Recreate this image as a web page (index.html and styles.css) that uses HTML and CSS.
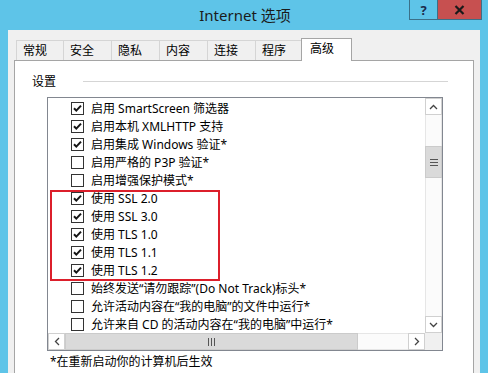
FILE: index.html
```html
<!DOCTYPE html>
<html lang="zh-CN">
<head>
    <meta charset="UTF-8">
    <meta name="viewport" content="width=device-width, initial-scale=1.0">
    <title>Internet 选项</title>
    <link rel="stylesheet" href="styles.css">
</head>
<body>
    <div class="window">
        <!-- Title bar -->
        <div class="titlebar">
            <div></div>
            <div class="title">Internet 选项</div>
            <div class="caption-btns">
                <div class="cap-btn help">?</div>
                <div class="cap-btn close">
                    <svg width="11" height="10" viewBox="0 0 11 10"><path d="M1.5 1 L9.5 9 M9.5 1 L1.5 9" stroke="#1a1a1a" stroke-width="2.2"/></svg>
                </div>
            </div>
        </div>

        <div class="client">
            <!-- Tabs -->
            <div class="tabs">
                <div class="tab t1">常规</div>
                <div class="tab">安全</div>
                <div class="tab">隐私</div>
                <div class="tab">内容</div>
                <div class="tab">连接</div>
                <div class="tab t6">程序</div>
                <div class="tab active">高级</div>
            </div>

            <div class="page">
                <div class="group-head">
                    <span>设置</span>
                    <div class="group-line"></div>
                </div>

                <div class="listbox">
                    <div class="list-items">
                        <div class="item"><span class="cb on"></span>启用 SmartScreen 筛选器</div>
                        <div class="item"><span class="cb on"></span>启用本机 XMLHTTP 支持</div>
                        <div class="item"><span class="cb on"></span>启用集成 Windows 验证*</div>
                        <div class="item"><span class="cb"></span>启用严格的 P3P 验证*</div>
                        <div class="item"><span class="cb"></span>启用增强保护模式*</div>
                        <div class="item"><span class="cb on"></span>使用 SSL 2.0</div>
                        <div class="item"><span class="cb on"></span>使用 SSL 3.0</div>
                        <div class="item"><span class="cb on"></span>使用 TLS 1.0</div>
                        <div class="item"><span class="cb on"></span>使用 TLS 1.1</div>
                        <div class="item"><span class="cb on"></span>使用 TLS 1.2</div>
                        <div class="item"><span class="cb"></span>始终发送“请勿跟踪”(Do Not Track)标头*</div>
                        <div class="item"><span class="cb"></span>允许活动内容在“我的电脑”的文件中运行*</div>
                        <div class="item"><span class="cb"></span>允许来自 CD 的活动内容在“我的电脑”中运行*</div>
                    </div>

                    <div class="vscroll">
                        <div class="sb-btn">
                            <svg width="9" height="6" viewBox="0 0 9 6"><path d="M1 5 L4.5 1.5 L8 5" fill="none" stroke="#444" stroke-width="1.3"/></svg>
                        </div>
                        <div class="v-track">
                            <div class="v-thumb"><span class="grip-h"></span><span class="grip-h"></span><span class="grip-h"></span></div>
                        </div>
                        <div class="sb-btn">
                            <svg width="9" height="6" viewBox="0 0 9 6"><path d="M1 1 L4.5 4.5 L8 1" fill="none" stroke="#444" stroke-width="1.3"/></svg>
                        </div>
                    </div>

                    <div class="hscroll">
                        <div class="sb-btn">
                            <svg width="6" height="9" viewBox="0 0 6 9"><path d="M5 1 L1.5 4.5 L5 8" fill="none" stroke="#444" stroke-width="1.3"/></svg>
                        </div>
                        <div class="h-track">
                            <div class="h-thumb"><span class="grip-v"></span><span class="grip-v"></span><span class="grip-v"></span></div>
                        </div>
                        <div class="sb-btn">
                            <svg width="6" height="9" viewBox="0 0 6 9"><path d="M1 1 L4.5 4.5 L1 8" fill="none" stroke="#444" stroke-width="1.3"/></svg>
                        </div>
                    </div>
                    <div class="corner"></div>

                    <!-- highlight drawn over the list -->
                    <div class="highlight"></div>
                </div>

                <div class="note">*在重新启动你的计算机后生效</div>
            </div>
        </div>
    </div>
</body>
</html>
```

FILE: styles.css
```css
body {
    margin: 0;
    padding: 0;
    font-family: "Noto Sans", "Noto Sans CJK SC", sans-serif;
    font-size: 12px;
    color: #000;
    background-color: #5ec4e8;
    overflow: hidden;
}
.window {
    width: 488px;
    height: 373px;
    display: flex;
    flex-direction: column;
    overflow: hidden;
}
.titlebar {
    height: 30px;
    display: grid;
    grid-template-columns: 1fr auto 1fr;
    flex-shrink: 0;
}
.title {
    font-size: 15px;
    line-height: 30px;
    color: #1b1b1b;
    padding-left: 2px;
}
.caption-btns {
    display: flex;
    justify-content: flex-end;
    align-items: flex-start;
    padding-right: 6px;
}
.cap-btn {
    height: 20px;
    box-sizing: border-box;
    display: flex;
    align-items: center;
    justify-content: center;
    border: 1px solid #3b7088;
    border-top: none;
}
.help {
    width: 28px;
    font-weight: bold;
    font-size: 13px;
    color: #1a2a4a;
    border-right: none;
}
.close {
    width: 45px;
    background-color: #c75050;
}
.client {
    flex: 1;
    margin: 0 8px;
    background-color: #f0f0f0;
    padding: 0 6px;
    display: flex;
    flex-direction: column;
}
.tabs {
    display: flex;
    align-items: flex-end;
    height: 30px;
    padding-left: 2px;
    position: relative;
    z-index: 1;
}
.tab {
    width: 49px;
    height: 20px;
    box-sizing: border-box;
    border: 1px solid #d5d5d5;
    border-bottom: none;
    background-color: #f0f0f0;
    padding-left: 6px;
    line-height: 19px;
    margin-right: -1px;
}
.t1 { width: 48px; }
.t6 { width: 47px; }
.tab.active {
    width: 51px;
    height: 23px;
    margin-bottom: -1px;
    background-color: #fff;
    border-color: #a5a5a5;
    line-height: 20px;
    padding-left: 8px;
}
.page {
    flex: 1;
    background-color: #fff;
    border: 1px solid #a5a5a5;
    border-bottom: none;
    padding-left: 17px;
}
.group-head {
    display: flex;
    align-items: center;
    height: 16px;
    margin-top: 12px;
}
.group-line {
    flex: 1;
    height: 1px;
    background-color: #d5d5d5;
    margin-left: 27px;
    margin-right: 25px;
}
.listbox {
    position: relative;
    margin-top: 8px;
    margin-left: 15px;
    width: 396px;
    height: 254px;
    box-sizing: border-box;
    border: 1px solid #828790;
    display: grid;
    grid-template-columns: 1fr 17px;
    grid-template-rows: 1fr 17px;
}
.list-items {
    padding-top: 1px;
    overflow: hidden;
}
.item {
    height: 18px;
    display: flex;
    align-items: center;
    padding-left: 23px;
    white-space: nowrap;
}
.cb {
    width: 13px;
    height: 13px;
    box-sizing: border-box;
    border: 1px solid #333;
    margin-right: 7px;
    flex-shrink: 0;
    background-color: #fff;
}
.cb.on {
    background-image: url("data:image/svg+xml;utf8,<svg xmlns='http://www.w3.org/2000/svg' width='11' height='11' viewBox='0 0 11 11'><path d='M2 5.2 L4.3 7.6 L9 2.6' fill='none' stroke='%23151515' stroke-width='2'/></svg>");
    background-repeat: no-repeat;
    background-position: center;
}
.vscroll {
    display: flex;
    flex-direction: column;
    background-color: #fbfbfb;
}
.sb-btn {
    width: 17px;
    height: 17px;
    box-sizing: border-box;
    border: 1px solid #d0d0d0;
    background-color: #fff;
    display: flex;
    align-items: center;
    justify-content: center;
    flex-shrink: 0;
}
.v-track {
    flex: 1;
    border-left: 1px solid #e6e6e6;
    border-right: 1px solid #e6e6e6;
    padding-top: 31px;
}
.v-thumb {
    height: 30px;
    margin: 0 -1px;
    background-color: #dadada;
    border: 1px solid #cbcbcb;
    display: flex;
    flex-direction: column;
    align-items: center;
    justify-content: center;
    gap: 2px;
}
.grip-h {
    width: 8px;
    height: 1px;
    background-color: #555;
}
.hscroll {
    display: flex;
    background-color: #fbfbfb;
}
.h-track {
    flex: 1;
    border-top: 1px solid #e6e6e6;
    border-bottom: 1px solid #e6e6e6;
}
.h-thumb {
    width: 293px;
    box-sizing: border-box;
    margin-top: -1px;
    height: 17px;
    background-color: #dadada;
    border: 1px solid #cbcbcb;
    display: flex;
    align-items: center;
    justify-content: center;
    gap: 2px;
}
.grip-v {
    width: 1px;
    height: 8px;
    background-color: #555;
}
.corner {
    background-color: #f0f0f0;
}
.highlight {
    position: absolute;
    left: 2px;
    top: 92px;
    width: 170px;
    height: 91px;
    box-sizing: border-box;
    border: 2px solid #dc1f2b;
}
.note {
    margin-top: 2px;
    margin-left: 18px;
    line-height: 18px;
}
```
